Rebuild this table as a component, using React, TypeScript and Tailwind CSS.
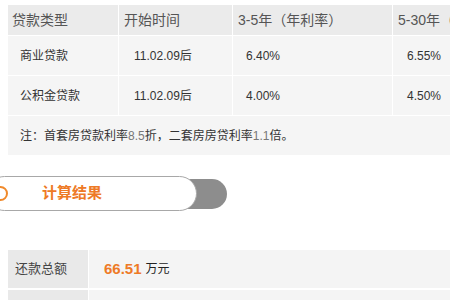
import React from 'react';

const font = { fontFamily: '"Liberation Sans", "Noto Sans CJK SC", sans-serif' };

const rows = [
  { type: '商业贷款', start: '11.02.09后', r1: '6.40%', r2: '6.55%' },
  { type: '公积金贷款', start: '11.02.09后', r1: '4.00%', r2: '4.50%' },
];

export default function App() {
  return (
    <div className="w-[450px] h-[300px] overflow-hidden bg-white" style={font}>
      {/* 利率表 */}
      <div className="pl-2 pt-[5px]">
        <div className="grid grid-cols-[110px_113px_159px_1fr] gap-x-px gap-y-px bg-white">
          <div className="h-[30px] bg-[#ebebeb] pl-1 flex items-center text-[14px] text-[#555]">贷款类型</div>
          <div className="h-[30px] bg-[#ebebeb] pl-[5px] flex items-center text-[14px] text-[#555]">开始时间</div>
          <div className="h-[30px] bg-[#ebebeb] pl-[5px] flex items-center text-[14px] text-[#555] whitespace-nowrap">3-5年（年利率）</div>
          <div className="h-[30px] bg-[#ebebeb] pl-[5px] flex items-center text-[14px] text-[#555] whitespace-nowrap">5-30年（年利率）</div>
          {rows.map((r) => (
            <React.Fragment key={r.type}>
              <div className="h-[39px] bg-[#f5f5f5] pl-3 flex items-center text-[12px] text-[#333]">{r.type}</div>
              <div className="h-[39px] bg-[#f5f5f5] pl-[15px] flex items-center text-[12px] text-[#333]">{r.start}</div>
              <div className="h-[39px] bg-[#f5f5f5] pl-[13px] flex items-center text-[12px] text-[#333]">{r.r1}</div>
              <div className="h-[39px] bg-[#f5f5f5] pl-[14px] flex items-center text-[12px] text-[#333]">{r.r2}</div>
            </React.Fragment>
          ))}
          <div className="col-span-4 h-[39px] bg-[#f5f5f5] pl-3 flex items-center text-[12px] text-[#333] whitespace-nowrap">
            注：首套房贷款利率<span className="text-[#777]">8.5</span>折，二套房房贷利率<span className="text-[#777]">1.1</span>倍。
          </div>
        </div>
      </div>

      {/* 计算结果 标签 */}
      <div className="mt-[21px] flex items-center">
        <div className="relative z-10 -ml-[13px] h-[35px] w-[210px] rounded-full border border-[#a8a8a8] bg-white flex items-center">
          <span className="ml-[5px] w-[15px] h-[15px] rounded-full border-2 border-[#f08a2c]" />
          <span className="ml-[34px] text-[15px] font-bold text-[#ee7a26]">计算结果</span>
        </div>
        <div className="-ml-[30px] h-[30px] w-[60px] rounded-r-full bg-[#8d8d8d]" />
      </div>

      {/* 结果表 */}
      <div className="mt-[39px] pl-2 flex flex-col gap-[2px]">
        <div className="flex h-[38px]">
          <div className="w-[80px] bg-[#e9e9e9] pl-[7px] flex items-center text-[13px] text-[#444]">还款总额</div>
          <div className="flex-1 ml-px bg-[#f4f4f4] pl-[15px] flex items-center gap-1">
            <span className="text-[15px] font-bold text-[#ee7a26]">66.51</span>
            <span className="text-[12px] text-[#222]">万元</span>
          </div>
        </div>
        <div className="flex h-[38px]">
          <div className="w-[80px] bg-[#e9e9e9]" />
          <div className="flex-1 ml-px bg-[#f4f4f4]" />
        </div>
      </div>
    </div>
  );
}
